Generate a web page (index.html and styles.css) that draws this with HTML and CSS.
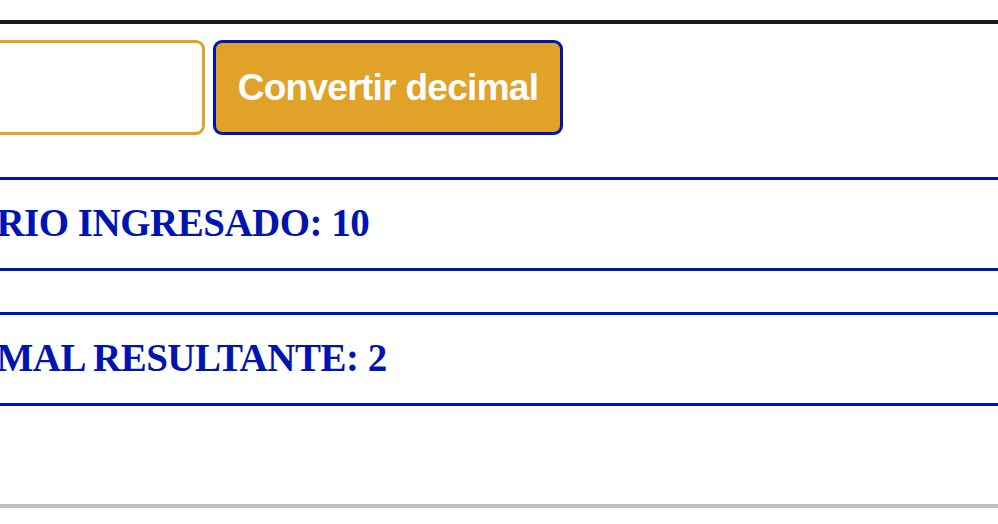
FILE: index.html
```html
<!DOCTYPE html>
<html lang="es">
<head>
    <meta charset="UTF-8">
    <meta name="viewport" content="width=device-width, initial-scale=1.0">
    <title>Conversor binario a decimal</title>
    <link rel="stylesheet" href="styles.css">
</head>
<body>
    <div class="page">
        <div class="converter">
            <input type="text" id="binario" class="binary-input" value="">
            <button class="convert-btn">Convertir decimal</button>
        </div>

        <div class="result">
            <h2>NÚMERO BINARIO INGRESADO: 10</h2>
        </div>
        <div class="result">
            <h2>NÚMERO DECIMAL RESULTANTE: 2</h2>
        </div>

        <div class="footer"></div>
    </div>
</body>
</html>
```

FILE: styles.css
```css
body {
    margin: 0;
    padding: 0;
    background: #fff;
    overflow: hidden;
    font-family: 'Liberation Serif', 'Times New Roman', serif;
}
.page {
    margin-left: -300px;
    padding-top: 20px;
}
.converter {
    border-top: 4px solid #1a1d21;
    padding: 16px 0 42px 17px;
    display: flex;
    gap: 8px;
}
.binary-input {
    width: 488px;
    height: 95px;
    box-sizing: border-box;
    border: 3px solid #e0a229;
    border-radius: 9px;
    padding: 0 12px;
    font-size: 32px;
    outline: none;
}
.convert-btn {
    width: 350px;
    height: 95px;
    box-sizing: border-box;
    background: #e0a229;
    border: 3px solid #0015b0;
    border-radius: 9px;
    color: #fff;
    font-family: 'Liberation Sans', Arial, sans-serif;
    font-weight: 700;
    font-size: 37px;
    letter-spacing: -0.7px;
    padding: 0;
}
.result {
    border-top: 3px solid #0015b0;
    border-bottom: 3px solid #0015b0;
    padding: 21px 0 23px 17px;
    margin-bottom: 41px;
}
.result h2 {
    margin: 0;
    font-size: 39px;
    line-height: 44px;
    letter-spacing: -0.5px;
    font-weight: bold;
    color: #0015b0;
    white-space: nowrap;
}
.result:last-of-type {
    margin-bottom: 0;
}
.footer {
    margin-top: 98px;
    border-top: 4px solid #bfc3c6;
}
```
